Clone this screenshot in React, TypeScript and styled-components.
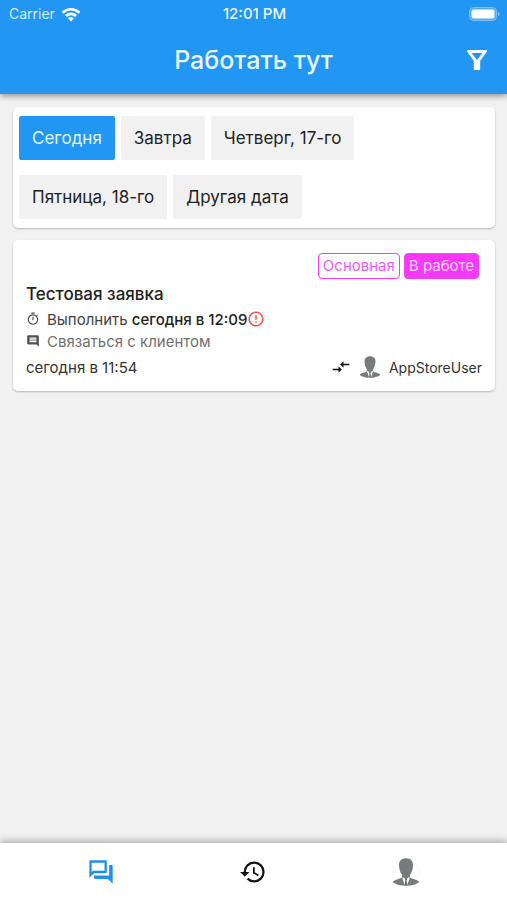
import React, { useState } from "react";
import styled, { createGlobalStyle, css } from "styled-components";
import {
  MdComment,
  MdCompareArrows,
  MdErrorOutline,
  MdHistory,
  MdOutlineForum,
  MdOutlineTimer,
} from "react-icons/md";

const GlobalStyle = createGlobalStyle`
  * { box-sizing: border-box; }
  body {
    margin: 0;
    background: #f1f1f1;
    color: #212121;
    font-family: Inter, "Liberation Sans", sans-serif;
  }
`;

const PlainButton = styled.button`
  padding: 0;
  border: 0;
  font: inherit;
  color: inherit;
  background: none;
  cursor: pointer;
`;

const Screen = styled.div`
  display: flex;
  flex-direction: column;
  min-height: 100vh;
`;

const TopBar = styled.header`
  background: #2196f3;
  color: #fff;
  box-shadow: 0 2px 6px rgba(0, 0, 0, 0.4);
`;

const StatusBar = styled.div`
  display: grid;
  grid-template-columns: 1fr auto 1fr;
  align-items: center;
  height: 28px;
  padding: 0 7px 0 9px;
  font-size: 14px;
  line-height: 20px;
`;

const Carrier = styled.span`
  display: flex;
  align-items: center;
  gap: 6px;
  color: #d9edff;
`;

const Clock = styled.time`
  font-size: 15px;
  font-weight: 500;
  color: #e6f4ff;
`;

const BatterySlot = styled.span`
  display: flex;
  justify-content: flex-end;
`;

const TitleBar = styled.div`
  display: grid;
  grid-template-columns: 48px 1fr 48px;
  align-items: center;
  height: 66px;
  padding: 0 6px 2px;
`;

const Title = styled.h1`
  grid-column: 2;
  margin: 0;
  font-size: 25px;
  line-height: 32px;
  font-weight: 500;
  text-align: center;
  color: #e9f6ff;
`;

const IconButton = styled(PlainButton)`
  display: flex;
  align-items: center;
  justify-content: center;
  height: 48px;
`;

const Content = styled.main`
  flex: 1;
  display: flex;
  flex-direction: column;
  gap: 12px;
  padding: 13px 12px 13px 13px;
`;

const cardSurface = css`
  background: #fff;
  border-radius: 5px;
  box-shadow: 0 1px 2px rgba(0, 0, 0, 0.25);
`;

const DateCard = styled.section`
  ${cardSurface}
  display: flex;
  flex-wrap: wrap;
  gap: 15px 6px;
  padding: 9px 6px;
`;

const DateChip = styled(PlainButton)<{ $active: boolean }>`
  height: 44px;
  padding: 0 13px;
  border-radius: 2px;
  font-size: 17px;
  line-height: 24px;
  background: ${(p) => (p.$active ? "#2196f3" : "#f1f1f1")};
  color: ${(p) => (p.$active ? "#e6f4ff" : "#212121")};
`;

const TaskCard = styled.article`
  ${cardSurface}
  display: flex;
  flex-direction: column;
  padding: 13px 13px 9px;
`;

const Badges = styled.div`
  display: flex;
  justify-content: flex-end;
  gap: 4px;
  padding-right: 3px;
`;

const Badge = styled.span<{ $filled?: boolean }>`
  padding: 0 4px;
  border: 1px solid #f53dfa;
  border-radius: 4px;
  font-size: 15px;
  line-height: 24px;
  background: ${(p) => (p.$filled ? "#f837ff" : "#fff")};
  color: ${(p) => (p.$filled ? "#ffd9ff" : "#f05cf5")};
`;

const TaskTitle = styled.h2`
  margin: 3px 0 2px;
  font-size: 17px;
  line-height: 24px;
  font-weight: 500;
`;

const TaskLine = styled.div<{ $muted?: boolean }>`
  display: flex;
  align-items: center;
  height: 22px;
  font-size: 15px;
  color: ${(p) => (p.$muted ? "#707070" : "#424242")};

  strong {
    font-weight: 500;
    color: #212121;
  }

  > svg:first-child {
    margin-right: 7px;
    color: #505050;
  }
`;

const TaskText = styled.span`
  white-space: pre;
`;

const TaskFooter = styled.footer`
  display: flex;
  align-items: center;
  justify-content: space-between;
  height: 30px;
  color: #333;
`;

const CreatedAt = styled.time`
  font-size: 15px;
`;

const Assignee = styled.span`
  display: flex;
  align-items: center;
  gap: 8px;
  font-size: 14px;
`;

const TabBar = styled.nav`
  position: sticky;
  bottom: 0;
  display: flex;
  height: 57px;
  padding: 0 25px;
  background: #fff;
  box-shadow: 0 -2px 7px rgba(0, 0, 0, 0.3);
`;

const Tab = styled(PlainButton)<{ $active: boolean }>`
  flex: 1;
  display: flex;
  align-items: center;
  justify-content: center;
  color: ${(p) => (p.$active ? "#2090ee" : "#111")};
`;

const WifiIcon = () => (
  <svg width="20" height="15" viewBox="0 0 20 15" fill="none" stroke="#fff" strokeWidth="2.7" aria-hidden="true">
    <path d="M1.6 5.7a12 12 0 0 1 16.8 0" />
    <path d="M4.9 9a7.3 7.3 0 0 1 10.2 0" />
    <path d="M10 14.4 6.9 11.3a4.4 4.4 0 0 1 6.2 0Z" fill="#fff" stroke="none" />
  </svg>
);

const BatteryIcon = () => (
  <svg width="31" height="14" viewBox="0 0 31 14" aria-hidden="true">
    <rect x="0.5" y="0.5" width="27" height="13" rx="4" fill="#4dacf6" stroke="#7cc2f8" />
    <rect x="2.5" y="2.5" width="23" height="9" rx="2" fill="#fff" />
    <path d="M29 5c2 .7 2 3.3 0 4Z" fill="#8bc9f9" />
  </svg>
);

const FilterIcon = () => (
  <svg width="22" height="22" viewBox="0 0 22 22" aria-hidden="true">
    <path
      fill="#fff"
      fillRule="evenodd"
      d="M1.8 1h18.4c.9 0 1.3.9.8 1.6L14.2 11.800V20c0 .6-.4 1-1 1H8.800c-.6 0-1-.4-1-1v-8.200L1 2.600C.5 1.900.9 1 1.800 1Zm3.800 2.900L11 11l5.400-7.100Z"
    />
  </svg>
);

const PersonIcon = ({ size }: { size: number }) => (
  <svg width={size} height={size} viewBox="0 0 28 28" aria-hidden="true">
    <circle cx="14" cy="14" r="13.5" fill="#fff" stroke="#f7f7f7" />
    <path
      d="M14 .2C9.500.2 6.800 3 7 7.400c.2 4.300 1.500 7.400 3 9.400v2.400c-.3.700-1 1-2.200 1.400L3.600 22c-1.500.5-2.400 1.300-2.700 2.200C4 26.600 8.400 27.800 14 27.800s10-1.200 13.100-3.600c-.3-.9-1.200-1.700-2.700-2.200l-4.200-1.400c-1.200-.4-1.900-.7-2.200-1.400v-2.400c1.500-2 2.800-5.100 3-9.400.2-4.400-2.500-7.200-7-7.200Z"
      fill="#777b7b"
    />
    <path d="m10.600 18.900 3.400 2 3.400-2 .2 1.500-2.500 6.900h-2.200l-2.500-6.900Z" fill="#fff" />
    <path d="m12.700 20.500 1.300-.5 1.300.5-.6 1.700.6 5.200h-2.600l.6-5.200Z" fill="#696d6d" />
  </svg>
);

const dates = ["Сегодня", "Завтра", "Четверг, 17-го", "Пятница, 18-го", "Другая дата"];

const tabs = [
  { label: "Заявки", icon: <MdOutlineForum size={28} /> },
  { label: "История", icon: <MdHistory size={28} /> },
  { label: "Профиль", icon: <PersonIcon size={28} /> },
];

export default function App() {
  const [date, setDate] = useState(0);
  const [tab, setTab] = useState(0);

  return (
    <Screen>
      <GlobalStyle />
      <TopBar>
        <StatusBar>
          <Carrier>
            Carrier
            <WifiIcon />
          </Carrier>
          <Clock>12:01 PM</Clock>
          <BatterySlot>
            <BatteryIcon />
          </BatterySlot>
        </StatusBar>
        <TitleBar>
          <Title>Работать тут</Title>
          <IconButton type="button" aria-label="Фильтр">
            <FilterIcon />
          </IconButton>
        </TitleBar>
      </TopBar>

      <Content>
        <DateCard>
          {dates.map((label, i) => (
            <DateChip
              key={label}
              type="button"
              $active={i === date}
              aria-pressed={i === date}
              onClick={() => setDate(i)}
            >
              {label}
            </DateChip>
          ))}
        </DateCard>

        <TaskCard>
          <Badges>
            <Badge>Основная</Badge>
            <Badge $filled>В работе</Badge>
          </Badges>
          <TaskTitle>Тестовая заявка</TaskTitle>
          <TaskLine>
            <MdOutlineTimer size={14} />
            <TaskText>
              Выполнить <strong>сегодня в 12:09</strong>
            </TaskText>
            <MdErrorOutline size={18} color="#f4564f" />
          </TaskLine>
          <TaskLine $muted>
            <MdComment size={14} />
            <TaskText>Связаться с клиентом</TaskText>
          </TaskLine>
          <TaskFooter>
            <CreatedAt>сегодня в 11:54</CreatedAt>
            <Assignee>
              <MdCompareArrows size={20} color="#111" />
              <PersonIcon size={22} />
              AppStoreUser
            </Assignee>
          </TaskFooter>
        </TaskCard>
      </Content>

      <TabBar>
        {tabs.map(({ label, icon }, i) => (
          <Tab
            key={label}
            type="button"
            aria-label={label}
            $active={i === tab}
            onClick={() => setTab(i)}
          >
            {icon}
          </Tab>
        ))}
      </TabBar>
    </Screen>
  );
}
